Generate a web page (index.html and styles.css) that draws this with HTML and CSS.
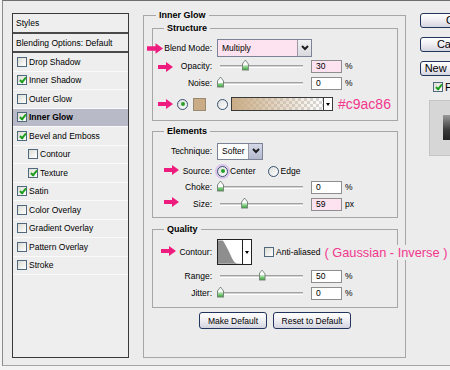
FILE: index.html
```html
<!DOCTYPE html>
<html lang="en">

<head>
    <meta charset="UTF-8">
    <meta name="viewport" content="width=device-width, initial-scale=1.0">

    <title>Layer Style - Inner Glow</title>
    <link rel="stylesheet" href="styles.css">
</head>

<body>
    <div class="dialog">
        <ul class="style-list">
            <li class="list-head">Styles</li>
            <li class="list-blend">Blending Options: Default</li>
            <li><span class="chk"></span>Drop Shadow</li>
            <li><span class="chk on"></span>Inner Shadow</li>
            <li><span class="chk"></span>Outer Glow</li>
            <li class="active"><span class="chk on"></span>Inner Glow</li>
            <li><span class="chk on"></span>Bevel and Emboss</li>
            <li class="sub"><span class="chk"></span>Contour</li>
            <li class="sub"><span class="chk on"></span>Texture</li>
            <li><span class="chk on"></span>Satin</li>
            <li><span class="chk"></span>Color Overlay</li>
            <li><span class="chk"></span>Gradient Overlay</li>
            <li><span class="chk"></span>Pattern Overlay</li>
            <li><span class="chk"></span>Stroke</li>
        </ul>

        <fieldset class="group outer">
            <legend>Inner Glow</legend>

            <fieldset class="group structure">
                <legend>Structure</legend>
                <div class="row row-select">
                    <span class="lbl">Blend Mode:</span>
                    <div class="combo blend">
                        <span class="combo-text pink">Multiply</span>
                        <span class="combo-btn">
                            <svg width="8" height="6" viewBox="0 0 8 6"><path d="M1 1l3 3 3-3" /></svg>
                        </span>
                    </div>
                </div>
                <div class="row">
                    <span class="lbl">Opacity:</span>
                    <div class="slider"><div class="track"><span class="thumb" style="left: 30%"></span></div></div>
                    <span class="num pink">30</span>
                    <span class="unit">%</span>
                </div>
                <div class="row row-tight">
                    <span class="lbl">Noise:</span>
                    <div class="slider"><div class="track"><span class="thumb" style="left: 0%"></span></div></div>
                    <span class="num">0</span>
                    <span class="unit">%</span>
                </div>
                <div class="row row-color">
                    <span class="radio on"></span>
                    <span class="swatch"></span>
                    <span class="radio radio-grad"></span>
                    <span class="gradient">
                        <span class="gradient-bar"></span>
                        <span class="drop-btn"></span>
                    </span>
                    <span class="note">#c9ac86</span>
                </div>
            </fieldset>

            <fieldset class="group elements">
                <legend>Elements</legend>
                <div class="row row-select">
                    <span class="lbl">Technique:</span>
                    <div class="combo technique">
                        <span class="combo-text">Softer</span>
                        <span class="combo-btn">
                            <svg width="8" height="6" viewBox="0 0 8 6"><path d="M1 1l3 3 3-3" /></svg>
                        </span>
                    </div>
                </div>
                <div class="row row-source">
                    <span class="lbl">Source:</span>
                    <span class="radio on focus"></span>
                    <span class="radio-text">Center</span>
                    <span class="radio radio-edge"></span>
                    <span class="radio-text">Edge</span>
                </div>
                <div class="row">
                    <span class="lbl">Choke:</span>
                    <div class="slider"><div class="track"><span class="thumb" style="left: 0%"></span></div></div>
                    <span class="num">0</span>
                    <span class="unit">%</span>
                </div>
                <div class="row row-tight">
                    <span class="lbl">Size:</span>
                    <div class="slider"><div class="track"><span class="thumb" style="left: 29%"></span></div></div>
                    <span class="num pink">59</span>
                    <span class="unit">px</span>
                </div>
            </fieldset>

            <fieldset class="group quality">
                <legend>Quality</legend>
                <div class="row row-contour">
                    <span class="lbl">Contour:</span>
                    <span class="contour">
                        <svg class="curve" width="24" height="24" viewBox="0 0 24 24">
                            <path d="M0 0H5C7 3 9 7 11 11C13 15 14 18 16 21C17 23 19 24 24 24H0Z" />
                        </svg>
                        <span class="drop-btn"></span>
                    </span>
                    <span class="chk chk-aa"></span>
                    <span class="aa-text">Anti-aliased</span>
                    <span class="note note-curve">( Gaussian - Inverse )</span>
                </div>
                <div class="row row-range">
                    <span class="lbl">Range:</span>
                    <div class="slider"><div class="track"><span class="thumb" style="left: 50%"></span></div></div>
                    <span class="num">50</span>
                    <span class="unit">%</span>
                </div>
                <div class="row row-tight">
                    <span class="lbl">Jitter:</span>
                    <div class="slider"><div class="track"><span class="thumb" style="left: 0%"></span></div></div>
                    <span class="num">0</span>
                    <span class="unit">%</span>
                </div>
            </fieldset>

            <div class="buttons">
                <button class="btn btn-make">Make Default</button>
                <button class="btn btn-reset">Reset to Default</button>
            </div>
        </fieldset>

        <div class="side">
            <button class="btn side-btn">OK</button>
            <button class="btn side-btn">Cancel</button>
            <button class="btn side-btn side-last">New Style...</button>
            <div class="side-check"><span class="chk on"></span>Preview</div>
            <div class="preview-box">
                <div class="preview-thumb"></div>
            </div>
        </div>

        <!-- pink arrows drawn over the dialog -->
        <svg class="arrow arrow-blend" viewBox="0 0 15 10"><path d="M0 3H8V0L15 5 8 10V7H0Z" /></svg>
        <svg class="arrow arrow-opacity" viewBox="0 0 15 10"><path d="M0 3H8V0L15 5 8 10V7H0Z" /></svg>
        <svg class="arrow arrow-color" viewBox="0 0 15 10"><path d="M0 3H8V0L15 5 8 10V7H0Z" /></svg>
        <svg class="arrow arrow-source" viewBox="0 0 15 10"><path d="M0 3H8V0L15 5 8 10V7H0Z" /></svg>
        <svg class="arrow arrow-size" viewBox="0 0 15 10"><path d="M0 3H8V0L15 5 8 10V7H0Z" /></svg>
        <svg class="arrow arrow-contour" viewBox="0 0 15 10"><path d="M0 3H8V0L15 5 8 10V7H0Z" /></svg>
    </div>
</body>

</html>
```

FILE: styles.css
```css
body {
    margin: 0;
    background-color: #f3f3f3;
    font-family: "Liberation Sans", Arial, sans-serif;
    font-size: 8.5px;
    color: #000;
    overflow: hidden;
}

.dialog {
    position: relative;
    display: flex;
    align-items: flex-start;
    height: 364px;
    margin-left: 2px;
    background-color: #ececec;
    border-top: 1px solid #6e6e6e;
    border-left: 1px solid #8a8a8a;
    border-bottom: 1px solid #a4a4a4;
}

/* styles list */
.style-list {
    flex-shrink: 0;
    list-style: none;
    margin: 12px 0 0 9px;
    padding: 0;
    width: 117px;
    height: 345px;
    box-sizing: border-box;
    border: 1px solid #3a3a3a;
    background-color: #eeeeee;
}

.style-list li {
    display: flex;
    align-items: center;
    height: 18.5px;
    box-sizing: border-box;
    padding-left: 4px;
    border-bottom: 1px solid #fafafa;
    white-space: nowrap;
}

.style-list .list-head {
    height: 20px;
    padding-left: 3px;
    border-bottom: 2px solid #4a4a4a;
}

.style-list .list-blend {
    height: 19px;
    padding-left: 3px;
    border-bottom: 2px solid #4a4a4a;
}

.style-list .active {
    background-color: #b9bac8;
    font-weight: bold;
}

.style-list .sub {
    padding-left: 15px;
}

.chk {
    position: relative;
    flex-shrink: 0;
    width: 10px;
    height: 10px;
    box-sizing: border-box;
    margin-right: 2px;
    border: 1px solid #50687e;
    background: linear-gradient(135deg, #dcdcd4, #ffffff);
}

.chk.on::after {
    content: "";
    position: absolute;
    left: 2.5px;
    top: 0;
    width: 2px;
    height: 5px;
    border: solid #1f9f1f;
    border-width: 0 2px 2px 0;
    transform: rotate(40deg);
}

/* group boxes */
.group {
    margin: 0;
    padding: 0;
    min-width: 0;
    border: 1px solid #a6a6a6;
}

.group legend {
    padding: 0 3px;
    margin-left: 11px;
    font-size: 9px;
    font-weight: bold;
    line-height: 12px;
}

.outer {
    flex-shrink: 0;
    width: 263px;
    height: 349px;
    box-sizing: border-box;
    margin: 8px 0 0 14px;
    padding: 1px 7px 0 8px;
}

.outer > legend {
    margin-left: 4px;
}

.structure {
    padding: 4px 0 8px;
}

.elements {
    margin-top: 4px;
    padding: 4px 0 5px;
}

.quality {
    margin-top: 5px;
    padding: 4px 0 6px;
}

/* rows */
.row {
    display: flex;
    align-items: center;
    height: 16px;
    white-space: nowrap;
}

.row-select {
    height: 20px;
}

.row-tight {
    margin-top: 1px;
}

.row-color {
    height: 16px;
    margin-top: 5px;
    padding-left: 24px;
}

.row-source {
    margin-top: 2px;
}

.row-contour {
    height: 26px;
}

.row-range {
    margin-top: 3px;
}

.lbl {
    flex-shrink: 0;
    width: 59px;
    margin-right: 5px;
    text-align: right;
}

/* combo boxes */
.combo {
    display: flex;
    height: 18px;
    box-sizing: border-box;
    border: 1px solid #7a8494;
    background-color: #fff;
}

.blend {
    width: 95px;
}

.technique {
    width: 46px;
    height: 17px;
}

.combo-text {
    flex: 1;
    display: flex;
    align-items: center;
    padding-left: 4px;
}

.combo-btn {
    display: flex;
    align-items: center;
    justify-content: center;
    width: 13px;
    border-left: 1px solid #9a9aa6;
    background: linear-gradient(#f2f2f4, #d8d8de);
}

.technique .combo-btn {
    background: linear-gradient(#d4d8e8, #b4b9cf);
}

.combo-btn path {
    fill: none;
    stroke: #1e1e1e;
    stroke-width: 2;
}

.pink {
    background-color: #fde2ef;
}

/* sliders */
.slider {
    flex-shrink: 0;
    width: 89px;
    padding: 0 3px;
    box-sizing: border-box;
}

.track {
    position: relative;
    height: 1px;
    border-top: 1px solid #a2a2a2;
    border-bottom: 1px solid #ffffff;
    background-color: #d2d2d2;
}

.thumb {
    position: absolute;
    top: -6px;
    width: 7px;
    height: 11px;
    margin-left: -3px;
    background-color: #78867a;
    clip-path: polygon(50% 0, 100% 40%, 100% 100%, 0 100%, 0 40%);
}

.thumb::after {
    content: "";
    position: absolute;
    inset: 1px;
    background: linear-gradient(#fbfbfb 50%, #bfe6bf 50%, #2aa52a);
    clip-path: polygon(50% 0, 100% 40%, 100% 100%, 0 100%, 0 40%);
}

.num {
    flex-shrink: 0;
    width: 31px;
    height: 13px;
    box-sizing: border-box;
    margin-left: 5px;
    padding-left: 4px;
    line-height: 11px;
    border: 1px solid #8e8e8e;
}

.num:not(.pink) {
    background-color: #fff;
}

.unit {
    margin-left: 3px;
}

/* colour row */
.radio {
    flex-shrink: 0;
    display: flex;
    align-items: center;
    justify-content: center;
    width: 11px;
    height: 11px;
    box-sizing: border-box;
    border: 1px solid #34526f;
    border-radius: 50%;
    background: linear-gradient(135deg, #dedede, #ffffff);
}

.radio.on::after {
    content: "";
    width: 4px;
    height: 4px;
    border-radius: 50%;
    background-color: #27a127;
}

.radio.focus {
    box-shadow: 0 0 0 2px #dcc2ea;
}

.swatch {
    flex-shrink: 0;
    width: 13px;
    height: 13px;
    box-sizing: border-box;
    margin-left: 5px;
    border: 1px solid #9a8a72;
    background-color: #c9ac86;
}

.radio-grad {
    margin-left: 11px;
}

.gradient {
    flex-shrink: 0;
    display: flex;
    width: 102px;
    height: 14px;
    box-sizing: border-box;
    margin-left: 3px;
    border: 1px solid #3a3a3a;
}

.gradient-bar {
    flex: 1;
    background:
        linear-gradient(to right, #c9ac86, rgba(201, 172, 134, 0)),
        repeating-conic-gradient(#ffffff 0 25%, #d8d8d8 0 50%) 0 0 / 6px 6px;
}

.drop-btn {
    display: flex;
    align-items: center;
    justify-content: center;
    width: 8px;
    border-left: 1px solid #3a3a3a;
    background-color: #fff;
}

.drop-btn::after {
    content: "";
    border-top: 3px solid #000;
    border-left: 2px solid transparent;
    border-right: 2px solid transparent;
}

.note {
    flex-shrink: 0;
    margin-left: 5px;
    padding-right: 2px;
    color: #f2378c;
    font-size: 14px;
    white-space: nowrap;
    background-color: #ececec;
}

.note-curve {
    margin-left: 4px;
    font-size: 12.8px;
}

/* source row */
.radio-text {
    margin-left: 2px;
}

.radio-edge {
    margin-left: 12px;
}

/* contour */
.contour {
    flex-shrink: 0;
    display: flex;
    width: 35px;
    height: 26px;
    box-sizing: border-box;
    border: 1px solid #222;
    background-color: #fff;
}

.curve {
    margin-right: 1px;
}

.curve path {
    fill: #8e8e8e;
}

.contour .drop-btn {
    border-left-color: #222;
}

.chk-aa {
    margin-left: 12px;
}

.aa-text {
    flex-shrink: 0;
}

/* buttons */
.btn {
    font: inherit;
    color: #000;
    height: 17px;
    padding: 0;
    border: 1px solid #22355c;
    border-radius: 3px;
    background: linear-gradient(#ffffff, #f0f0f4 45%, #d4d4e0);
    white-space: nowrap;
}

.buttons {
    display: flex;
    justify-content: center;
    gap: 6px;
    margin-top: 4px;
}

.btn-make {
    width: 68px;
}

.btn-reset {
    width: 78px;
}

/* right column */
.side {
    flex-shrink: 0;
    display: flex;
    flex-direction: column;
    align-items: flex-start;
    width: 68px;
    margin: 12px 0 0 14px;
}

.side-btn {
    width: 68px;
    height: 15px;
    margin-bottom: 9px;
    font-size: 11px;
    line-height: 13px;
}

.side .side-last {
    margin-bottom: 6px;
}

.side-check {
    display: flex;
    align-items: center;
    height: 10px;
    margin-left: 13px;
    font-size: 11px;
}

.preview-box {
    width: 60px;
    height: 56px;
    box-sizing: border-box;
    margin: 8px 0 0 9px;
    padding: 14px 0 0 13px;
    border: 1px solid #c4c4c4;
    background-color: #d6d6d6;
}

.preview-thumb {
    width: 40px;
    height: 25px;
    background: linear-gradient(#9a9a9a, #3a3a3a 60%, #222);
}

/* annotation arrows */
.arrow {
    position: absolute;
    width: 15px;
    height: 10px;
}

.arrow path {
    fill: #ee1c7e;
}

.arrow-blend {
    left: 144px;
    top: 42px;
    width: 16px;
    height: 11px;
}

.arrow-opacity {
    left: 155px;
    top: 61px;
}

.arrow-color {
    left: 155px;
    top: 98px;
}

.arrow-source {
    left: 161px;
    top: 164px;
}

.arrow-size {
    left: 161px;
    top: 196px;
}

.arrow-contour {
    left: 158px;
    top: 245px;
}
```
